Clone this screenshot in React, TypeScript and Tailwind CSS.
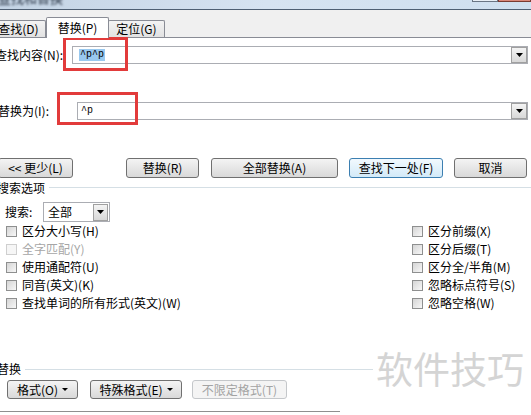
import React from "react";

const cn = (...c: (string | false | undefined)[]) => c.filter(Boolean).join(" ");

const Arrow = ({ className = "" }: { className?: string }) => (
  <div className={cn("flex items-center justify-center border border-[#a0a0a0] bg-linear-to-b from-[#f4f4f4] to-[#d8d8d8]", className)}>
    <svg width="7" height="4" viewBox="0 0 7 4">
      <path d="M0 0h7L3.5 4z" fill="#000" />
    </svg>
  </div>
);

const Btn = ({
  children,
  className = "",
  primary = false,
  disabled = false,
}: {
  children: React.ReactNode;
  className?: string;
  primary?: boolean;
  disabled?: boolean;
}) => (
  <div
    className={cn(
      "flex items-center justify-center rounded-[3px] border text-[12px] leading-none shrink-0",
      primary && "border-[#3c7fb1] bg-linear-to-b from-[#f2f9fe] to-[#d3eaf8] text-black",
      disabled && "border-[#c4c7ca] bg-[#f4f4f4] text-[#a3a3a3]",
      !primary && !disabled && "border-[#707070] bg-linear-to-b from-[#f4f4f4] to-[#d9d9d9] text-black",
      className
    )}
  >
    {children}
  </div>
);

const Check = ({ label, disabled = false }: { label: string; disabled?: boolean }) => (
  <div className="h-[18px] flex items-center">
    <div
      className={cn(
        "w-[11px] h-[11px] border",
        disabled ? "border-[#cfcfcf] bg-[#f6f6f6]" : "border-[#8e8f8f] bg-linear-to-br from-[#d5d5d5] to-[#f7f7f7]"
      )}
    />
    <span className={cn("ml-[5px] text-[12px] leading-none", disabled ? "text-[#a6a6a6]" : "text-black")}>{label}</span>
  </div>
);

const Tab = ({ label, active = false, className = "" }: { label: string; active?: boolean; className?: string }) => (
  <div
    className={cn(
      "flex items-center justify-center border border-[#898c95] rounded-t-[2px] text-[12px] leading-none",
      active
        ? "h-[21px] bg-white border-b-0 mb-[-1px] relative z-10"
        : "h-[17px] bg-linear-to-b from-[#f3f3f3] to-[#e2e2e2] border-b-0",
      className
    )}
  >
    {label}
  </div>
);

export default function App() {
  return (
    <div className="w-[531px] h-[415px] overflow-hidden bg-white relative font-['Noto_Sans_CJK_SC','Noto_Sans',sans-serif] text-black">
      {/* title bar */}
      <div className="h-[10px] overflow-hidden bg-linear-to-r from-[#c3d3e4] via-[#d6e3f1] to-[#cfdfef] flex justify-between border-b border-[#4e5f73]">
        <span className="text-[13px] leading-none mt-[-9px] ml-[-2px] text-[#2a3646] blur-[1px]">查找和替换</span>
        <div className="flex mt-[-10px] h-[12px]">
          <div className="w-[26px] border border-[#6a7584] bg-[#e8eef5]" />
          <div className="w-[33px] border border-[#7a3b32] bg-[#d9887a]" />
        </div>
      </div>

      {/* tabs */}
      <div className="h-[28px] bg-[#f0f0f0] border-b border-[#898c95] flex items-end">
        <Tab label="查找(D)" className="w-[55px] ml-[-9px]" />
        <Tab label="替换(P)" active className="w-[63px]" />
        <Tab label="定位(G)" className="w-[57px] ml-[-1px]" />
      </div>

      {/* panel */}
      <div className="relative">
        <div className="pt-[8px] flex items-center h-[26px]">
          <span className="w-[77px] ml-[-5px] text-[12px] leading-none">查找内容(N):</span>
          <div className="flex-1 mr-[3px] h-[18px] border border-[#abadb3] flex items-center justify-between pl-[6px]">
            <span className="font-['Liberation_Mono',monospace] text-[10px] leading-[12px] bg-[#99c9ef] px-[1px]">^p^p</span>
            <Arrow className="w-[16px] h-[16px]" />
          </div>
        </div>

        <div className="mt-[38px] flex items-center h-[18px]">
          <span className="w-[79px] ml-[-2px] text-[12px] leading-none">替换为(I):</span>
          <div className="flex-1 mr-[3px] h-[18px] border border-[#abadb3] flex items-center justify-between pl-[3px]">
            <span className="font-['Liberation_Mono',monospace] text-[10px] leading-[12px]">^p</span>
            <Arrow className="w-[16px] h-[16px]" />
          </div>
        </div>

        <div className="mt-[38px] flex h-[20px]">
          <Btn className="w-[75px] ml-[-2px]">&lt;&lt; 更少(L)</Btn>
          <Btn className="w-[73px] ml-[53px]">替换(R)</Btn>
          <Btn className="w-[127px] ml-[12px]">全部替换(A)</Btn>
          <Btn primary className="w-[94px] ml-[11px]">查找下一处(F)</Btn>
          <Btn className="w-[73px] ml-[11px]">取消</Btn>
        </div>

        <div className="mt-[2px] h-[15px] flex items-center">
          <span className="ml-[-3px] text-[12px] leading-none">搜索选项</span>
          <div className="flex-1 h-px bg-[#d5dfe5] ml-[4px]" />
        </div>

        <div className="mt-[7px] h-[20px] flex items-center">
          <span className="ml-[5px] w-[38px] text-[12px] leading-none">搜索:</span>
          <div className="w-[67px] h-[20px] border border-[#abadb3] flex items-center justify-between pl-[4px]">
            <span className="text-[12px] leading-none">全部</span>
            <Arrow className="w-[15px] h-[17px] mr-px" />
          </div>
        </div>

        <div className="grid grid-cols-[406px_1fr] pl-[6px]">
          <div className="flex flex-col">
            <Check label="区分大小写(H)" />
            <Check label="全字匹配(Y)" disabled />
            <Check label="使用通配符(U)" />
            <Check label="同音(英文)(K)" />
            <Check label="查找单词的所有形式(英文)(W)" />
          </div>
          <div className="flex flex-col">
            <Check label="区分前缀(X)" />
            <Check label="区分后缀(T)" />
            <Check label="区分全/半角(M)" />
            <Check label="忽略标点符号(S)" />
            <Check label="忽略空格(W)" />
          </div>
        </div>

        <div className="mt-[50px] h-[14px] flex items-center">
          <span className="ml-[-3px] text-[12px] leading-none">替换</span>
          <div className="w-[348px] h-px bg-[#d5dfe5] ml-[4px]" />
        </div>

        <div className="mt-[4px] flex h-[19px]">
          <Btn className="w-[71px] ml-[7px] gap-[4px]">
            格式(O)
            <svg width="6" height="3" viewBox="0 0 6 3"><path d="M0 0h6L3 3z" fill="#000" /></svg>
          </Btn>
          <Btn className="w-[92px] ml-[12px] gap-[4px]">
            特殊格式(E)
            <svg width="6" height="3" viewBox="0 0 6 3"><path d="M0 0h6L3 3z" fill="#000" /></svg>
          </Btn>
          <Btn disabled className="w-[95px] ml-[10px]">不限定格式(T)</Btn>
        </div>

        <div className="mt-[12px] w-[340px] h-px bg-[#8f8f8f]" />
      </div>

      {/* red annotation boxes */}
      <div className="absolute left-[63px] top-[37px] w-[65px] h-[34px] border-[3px] border-[#e23b3b] pointer-events-none" />
      <div className="absolute left-[57px] top-[92px] w-[81px] h-[33px] border-[3px] border-[#e23b3b] pointer-events-none" />

      {/* watermark */}
      <div className="absolute left-[376px] top-[350px] text-[37px] leading-none text-[#d4d4d4] pointer-events-none">
        软件技巧
      </div>
    </div>
  );
}
